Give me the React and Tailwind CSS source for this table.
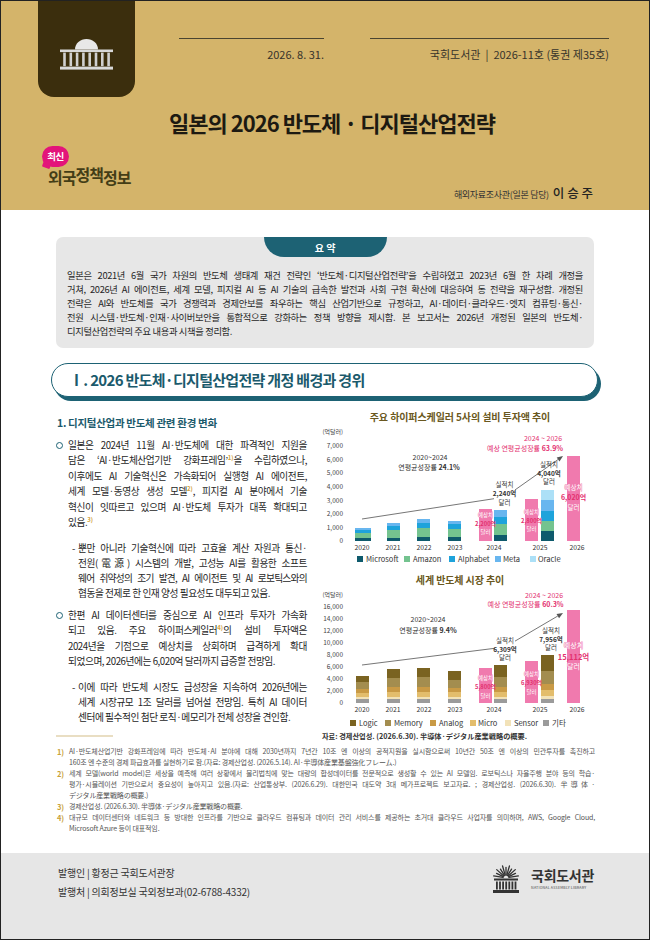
import React from "react";
import clsx from "clsx";

const J = ({ children, className }) => (
  <div className={clsx("whitespace-nowrap text-justify [text-align-last:justify]", className)}>{children}</div>
);
const L = ({ children, className }) => <div className={clsx("whitespace-nowrap", className)}>{children}</div>;
const S = ({ n }) => (
  <span className="relative -top-[4px] text-[6px] font-bold text-[#d3a23c] tracking-normal">{n})</span>
);

function TabIcon() {
  const cols = [0, 1, 2, 3, 4, 5, 6, 7];
  return (
    <svg width="53" height="31" viewBox="0 0 53 31" className="block">
      <path d="M15,10.5 A11.5,10.5 0 0 1 38,10.5 Z" fill="#e8e8e8" />
      <rect x="0" y="10.5" width="53" height="2.6" fill="#d8d8d8" />
      {cols.map((i) => (
        <rect key={i} x={3.2 + i * 6.3} y="13.6" width="2.6" height="13.6" fill="#d0d0d0" />
      ))}
      <rect x="0" y="27.6" width="53" height="3" fill="#dadada" />
    </svg>
  );
}

function LogoIcon() {
  const rays = [];
  for (let i = 0; i < 11; i++) {
    const a = ((190 + i * 16) * Math.PI) / 180;
    const r2 = i % 2 === 0 ? 12.5 : 10.5;
    rays.push(
      <line
        key={i}
        x1={13 + 3 * Math.cos(a)}
        y1={13 + 3 * Math.sin(a)}
        x2={13 + r2 * Math.cos(a)}
        y2={13 + r2 * Math.sin(a)}
        stroke="#333"
        strokeWidth="1.3"
        strokeLinecap="round"
      />
    );
  }
  const cols = [0, 1, 2, 3, 4, 5, 6];
  return (
    <svg width="26" height="28" viewBox="0 0 26 28" className="block">
      {rays}
      <rect x="1" y="13.5" width="24" height="2" fill="#333" />
      {cols.map((i) => (
        <rect key={i} x={3 + i * 3.1} y="16.5" width="1.8" height="8" fill="#333" />
      ))}
      <rect x="0" y="25" width="26" height="3" fill="#333" />
    </svg>
  );
}

const FONT = "'Noto Sans CJK KR', 'Noto Sans', sans-serif";
const PINK = "#f07aae";
const PTXT = "#e3306f";

function Stack({ x, w = 13, base, seg, colors }) {
  let y = base;
  return (
    <g>
      {seg.map((h, i) => {
        y -= h;
        return <rect key={i} x={x} y={y} width={w} height={h} fill={colors[i]} />;
      })}
    </g>
  );
}

function PinkLabel({ cx, y1, y2, y3, s, ns, num }) {
  return (
    <g textAnchor="middle">
      <text x={cx} y={y1} fontSize={s} fill="#fff" stroke={PINK} strokeWidth="0.8" paintOrder="stroke">
        예상치
      </text>
      <text x={cx} y={y2} fontSize={ns} fill={PTXT} fontWeight="700">
        {num}
      </text>
      <text x={cx} y={y3} fontSize={s} fill="#fff" stroke={PINK} strokeWidth="0.8" paintOrder="stroke">
        달러
      </text>
    </g>
  );
}

function ActLabel({ cx, y1, y2, y3, num }) {
  return (
    <g textAnchor="middle" fill="#333">
      <text x={cx} y={y1} fontSize="6.5">실적치</text>
      <text x={cx} y={y2} fontSize="6.5" fontWeight="700">{num}</text>
      <text x={cx} y={y3} fontSize="6.5">달러</text>
    </g>
  );
}

const years = [
  ["2020", 362],
  ["2021", 393],
  ["2022", 424],
  ["2023", 455],
  ["2024", 494],
  ["2025", 540],
  ["2026", 577],
];

function Chart1() {
  const base = 541;
  const C = ["#0e5a6c", "#74c38f", "#1ea3db", "#68b6ef", "#ace0f7"];
  const yl = [
    ["7,000", 7000],
    ["6,000", 6000],
    ["5,000", 5000],
    ["4,000", 4000],
    ["3,000", 3000],
    ["2,000", 2000],
    ["1,000", 1000],
    ["0", 0],
  ];
  const bars = [
    { x: 355, w: 16, seg: [3, 5, 3, 2] },
    { x: 387, seg: [3, 8, 4, 3] },
    { x: 417, seg: [4, 9, 5, 4] },
    { x: 448, seg: [4, 8, 5, 3] },
    { x: 494, seg: [6, 11, 7, 7] },
    { x: 541, seg: [10, 10, 10, 11, 10] },
  ];
  const pinks = [
    [479, 32],
    [525, 42],
    [567, 85],
  ];
  const legend = [
    ["Microsoft", 357, 366],
    ["Amazon", 404, 413],
    ["Alphabet", 449, 458],
    ["Meta", 495, 503],
    ["Oracle", 530, 538],
  ];
  return (
    <svg className="block" width="276" height="141" viewBox="322 425 276 141" fontFamily={FONT}>
      <text x="343" y="434.3" fontSize="6" fill="#444" textAnchor="end">
        (억달러)
      </text>
      {yl.map(([t, v]) => (
        <text key={t} x="343" y={base - v * 0.0136 + 2.3} fontSize="6.5" fill="#444" textAnchor="end">
          {t}
        </text>
      ))}
      {bars.map((b, i) => (
        <Stack key={i} x={b.x} w={b.w || 13} base={base} seg={b.seg} colors={C} />
      ))}
      {pinks.map(([x, h], i) => (
        <rect key={i} x={x} y={base - h} width="13" height={h} fill={PINK} />
      ))}
      <path d="M362,519 L505,497 L558.1,459.5" stroke="#666" strokeWidth="0.9" fill="none" />
      <polygon points="563,456 559.5,461.5 556.7,457.4" fill="#555" />
      <rect x="494" y="480" width="21" height="27" fill="#fff" />
      <g textAnchor="middle" fontSize="7" fill="#333">
        <text x="430" y="459.5">2020~2024</text>
        <text x="429" y="469.5">
          연평균성장률 <tspan fontWeight="700">24.1%</tspan>
        </text>
      </g>
      <g textAnchor="middle" fontSize="7" fill={PTXT}>
        <text x="543" y="440.5">2024 ~ 2026</text>
        <text x="525" y="450.5">
          예상 연평균성장률 <tspan fontWeight="700">63.9%</tspan>
        </text>
      </g>
      <ActLabel cx={504.5} y1={487} y2={495.5} y3={505} num="2,240억" />
      <ActLabel cx={549} y1={467} y2={475.5} y3={484} num="4,040억" />
      <PinkLabel cx={485.5} y1={517} y2={526} y3={534} s={5.5} ns={5.8} num="2,200억" />
      <PinkLabel cx={531.5} y1={514} y2={522.5} y3={531} s={5.5} ns={5.8} num="2,800억" />
      <PinkLabel cx={573.5} y1={489.5} y2={499.5} y3={509.5} s={6.5} ns={7} num="6,020억" />
      {years.map(([t, x]) => (
        <text key={t} x={x} y="549.5" fontSize="6.8" fill="#333" textAnchor="middle">
          {t}
        </text>
      ))}
      {legend.map(([t, rx, tx], i) => (
        <g key={t}>
          <rect x={rx} y="556" width="6" height="6" fill={C[i]} />
          <text x={tx} y="561.8" fontSize="7.5" fill="#333">
            {t}
          </text>
        </g>
      ))}
    </svg>
  );
}

function Chart2() {
  const base = 703;
  const C = ["#9b9b9b", "#f2e2b8", "#e3bd6c", "#c99a45", "#a38d4f", "#7a6321"];
  const yl = [
    ["16,000", 16000],
    ["14,000", 14000],
    ["12,000", 12000],
    ["10,000", 10000],
    ["8,000", 8000],
    ["6,000", 6000],
    ["4,000", 4000],
    ["2,000", 2000],
    ["0", 0],
  ];
  const bars = [
    { x: 356, seg: [4, 2, 4, 4, 7, 6] },
    { x: 387, seg: [4, 2, 5, 5, 9, 9] },
    { x: 417, seg: [4, 2, 5, 5, 10, 9] },
    { x: 448, seg: [4, 2, 5, 4, 8, 9] },
    { x: 494, seg: [4, 2, 5, 5, 10, 12] },
    { x: 541, seg: [4, 3, 6, 6, 13, 16] },
  ];
  const pinks = [
    [479, 35],
    [525, 42],
    [567, 93],
  ];
  const legend = [
    ["Logic", 350, 359],
    ["Memory", 385, 394],
    ["Analog", 430, 439],
    ["Micro", 470, 478],
    ["Sensor", 505, 514],
    ["기타", 543, 552],
  ];
  const legendColors = ["#7a6321", "#a38d4f", "#c99a45", "#e3bd6c", "#f2e2b8", "#9b9b9b"];
  return (
    <svg className="block" width="276" height="142" viewBox="322 588 276 142" fontFamily={FONT}>
      <text x="343" y="597.3" fontSize="6" fill="#444" textAnchor="end">
        (억달러)
      </text>
      {yl.map(([t, v]) => (
        <text key={t} x="343" y={base - v * 0.006 + 2.3} fontSize="6.5" fill="#444" textAnchor="end">
          {t}
        </text>
      ))}
      {bars.map((b, i) => (
        <Stack key={i} x={b.x} base={base} seg={b.seg} colors={C} />
      ))}
      {pinks.map(([x, h], i) => (
        <rect key={i} x={x} y={base - h} width="13" height={h} fill={PINK} />
      ))}
      <path d="M362,665 L505,647 L557.8,616" stroke="#666" strokeWidth="0.9" fill="none" />
      <polygon points="563,613 559.1,618.2 556.5,613.9" fill="#555" />
      <rect x="495" y="636" width="20" height="26" fill="#fff" />
      <g textAnchor="middle" fontSize="7" fill="#333">
        <text x="428" y="621.5">2020~2024</text>
        <text x="428" y="632.5">
          연평균성장률 <tspan fontWeight="700">9.4%</tspan>
        </text>
      </g>
      <g textAnchor="middle" fontSize="7" fill={PTXT}>
        <text x="544" y="597.5">2024 ~ 2026</text>
        <text x="525.5" y="606.5">
          예상 연평균성장률 <tspan fontWeight="700">60.3%</tspan>
        </text>
      </g>
      <ActLabel cx={505} y1={643} y2={651.5} y3={660} num="6,309억" />
      <ActLabel cx={551} y1={633} y2={641.5} y3={650} num="7,956억" />
      <PinkLabel cx={485.5} y1={680} y2={689} y3={698} s={5.5} ns={5.8} num="5,800억" />
      <PinkLabel cx={531.5} y1={676} y2={685} y3={694} s={5.5} ns={5.8} num="6,930억" />
      <PinkLabel cx={573.5} y1={648} y2={660} y3={669} s={7} ns={7.5} num="15,112억" />
      {years.map(([t, x]) => (
        <text key={t} x={x} y="712.3" fontSize="6.8" fill="#333" textAnchor="middle">
          {t}
        </text>
      ))}
      {legend.map(([t, rx, tx], i) => (
        <g key={t}>
          <rect x={rx} y="720" width="6" height="6" fill={legendColors[i]} />
          <text x={tx} y="725.8" fontSize="7.5" fill="#333">
            {t}
          </text>
        </g>
      ))}
    </svg>
  );
}

function Bullet({ className, children }) {
  return (
    <div className={clsx("flex", className)}>
      <div className="w-[12px] shrink-0 pt-[4px]">
        <div className="w-[7px] h-[7px] rounded-full border-[1.5px] border-[#1d6274]" />
      </div>
      <div className="w-[239px] text-[9.7px] leading-[15px] tracking-[-0.45px] text-[#262626]">{children}</div>
    </div>
  );
}

function Sub({ className, children }) {
  return (
    <div className={clsx("flex pl-[16px]", className)}>
      <div className="w-[6px] shrink-0 text-[9.7px] leading-[15px] text-[#262626]">-</div>
      <div className="w-[229px] text-[9.7px] leading-[15px] tracking-[-0.45px] text-[#262626]">{children}</div>
    </div>
  );
}

function Footnote({ n, lines }) {
  return (
    <div className="flex">
      <div className="w-[12px] shrink-0 font-bold text-[#c9a23a] text-[7.5px]">{n})</div>
      <div className="flex-1 min-w-0">
        {lines.map((l, i) =>
          i < lines.length - 1 ? <J key={i}>{l}</J> : <L key={i}>{l}</L>
        )}
      </div>
    </div>
  );
}

export default function App() {
  return (
    <div className="w-[650px] h-[940px] border border-[#222] bg-white flex flex-col overflow-hidden font-['Noto_Sans_CJK_KR','Noto_Sans',sans-serif] text-[#333]">
      {/* Header */}
      <div className="h-[209px] shrink-0 bg-[#d4b46a] flex">
        <div className="w-[139px] shrink-0 pl-[37px] flex flex-col items-start">
          <div className="w-[97px] h-[96px] bg-[#3b2e0d] rounded-b-[16px] flex justify-center pt-[38px]">
            <TabIcon />
          </div>
          <div className="relative mt-[49px] ml-[4px] w-[27px] h-[21px] rounded-full bg-[#e3147a] flex items-center justify-center">
            <span className="absolute left-[1px] bottom-[-1px] w-[8px] h-[8px] bg-[#e3147a] rotate-[20deg] rounded-[1px]" />
            <span className="relative text-white text-[9.5px] font-bold leading-none tracking-[-0.5px]">최신</span>
          </div>
          <div className="ml-[10px] text-[16px] leading-[20px] font-bold text-[#433d16] tracking-[-1px] whitespace-nowrap">
            외국<span className="relative -top-[3px]">정책</span>정보
          </div>
        </div>
        <div className="flex-1 flex flex-col">
          <div className="flex mt-[37px]">
            <div className="ml-[39px] w-[145px] border-t-[1.5px] border-[#4a4430] pt-[7px] text-right text-[11px] leading-[16px] text-[#37332a] whitespace-nowrap">
              2026. 8. 31.
            </div>
            <div className="ml-[46px] w-[239px] border-t-[1.5px] border-[#4a4430] pt-[7px] text-right text-[11px] leading-[16px] text-[#37332a] whitespace-nowrap">
              국회도서관<span className="mx-[5px]">|</span>2026-11호 (통권 제35호)
            </div>
          </div>
          <div className="mt-[45px] ml-[29px] text-[22px] leading-[30px] font-bold tracking-[-1px] text-[#1d1a12] whitespace-nowrap">
            일본의 2026 반도체 · 디지털산업전략
          </div>
          <div className="mt-[47px] flex justify-end items-baseline pr-[56px] whitespace-nowrap">
            <span className="text-[9px] tracking-[-0.3px] text-[#333]">해외자료조사관(일본 담당)</span>
            <span className="ml-[4px] text-[12.5px] font-medium text-[#222]">이 승 주</span>
          </div>
        </div>
      </div>

      {/* Summary */}
      <div className="mt-[27px] mx-[55px] h-[111px] shrink-0 bg-[#e7e7e7] rounded-[7px] flex flex-col">
        <div className="self-center w-[123px] h-[20px] bg-[#1d6274] rounded-b-[20px] flex items-center justify-center text-white text-[10px] font-bold">
          요 약
        </div>
        <div className="mt-[11px] px-[11px] text-[9.3px] leading-[14px] tracking-[-0.35px] text-[#262626]">
          <J>일본은 2021년 6월 국가 차원의 반도체 생태계 재건 전략인 ‘반도체·디지털산업전략’을 수립하였고 2023년 6월 한 차례 개정을</J>
          <J>거쳐, 2026년 AI 에이전트, 세계 모델, 피지컬 AI 등 AI 기술의 급속한 발전과 사회 구현 확산에 대응하여 동 전략을 재구성함. 개정된</J>
          <J>전략은 AI와 반도체를 국가 경쟁력과 경제안보를 좌우하는 핵심 산업기반으로 규정하고, AI·데이터·클라우드·엣지 컴퓨팅·통신·</J>
          <J>전원 시스템·반도체·인재·사이버보안을 통합적으로 강화하는 정책 방향을 제시함. 본 보고서는 2026년 개정된 일본의 반도체·</J>
          <L>디지털산업전략의 주요 내용과 시책을 정리함.</L>
        </div>
      </div>

      {/* Section heading */}
      <div className="mt-[15px] ml-[50px] mr-[51px] h-[34px] shrink-0 rounded-full border-[1.5px] border-[#1d6274] bg-white shadow-[3px_4px_0_0_#1d6274] flex items-center pl-[17px] text-[15px] font-bold tracking-[-0.7px] text-[#1b5a6c] whitespace-nowrap">
        Ⅰ. 2026 반도체·디지털산업전략 개정 배경과 경위
      </div>

      {/* Columns */}
      <div className="mt-[12px] flex shrink-0">
        <div className="ml-[55px] w-[252px] flex flex-col">
          <div className="pt-[6px] pl-[1px] text-[10.5px] leading-[16px] font-bold text-[#1b5a6c] tracking-[-0.3px] whitespace-nowrap">
            1. 디지털산업과 반도체 관련 환경 변화
          </div>
          <Bullet className="mt-[6.5px]">
            <J>일본은 2024년 11월 AI·반도체에 대한 파격적인 지원을</J>
            <J>
              담은 ‘AI·반도체산업기반 강화프레임’<S n="1" />을 수립하였으나,
            </J>
            <J>이후에도 AI 기술혁신은 가속화되어 실행형 AI 에이전트,</J>
            <J>
              세계 모델·동영상 생성 모델<S n="2" />, 피지컬 AI 분야에서 기술
            </J>
            <J>혁신이 잇따르고 있으며 AI·반도체 투자가 대폭 확대되고</J>
            <L>
              있음.<S n="3" />
            </L>
          </Bullet>
          <Sub className="mt-[10px]">
            <J>뿐만 아니라 기술혁신에 따라 고효율 계산 자원과 통신·</J>
            <J>전원(電源) 시스템의 개발, 고성능 AI를 활용한 소프트</J>
            <J className="tracking-[-0.7px]">웨어 취약성의 조기 발견, AI 에이전트 및 AI 로보틱스와의</J>
            <L>협동을 전제로 한 인재 양성 필요성도 대두되고 있음.</L>
          </Sub>
          <Bullet className="mt-[7px]">
            <J>한편 AI 데이터센터를 중심으로 AI 인프라 투자가 가속화</J>
            <J>
              되고 있음. 주요 하이퍼스케일러<S n="4" />의 설비 투자액은
            </J>
            <J>2024년을 기점으로 예상치를 상회하며 급격하게 확대</J>
            <L>되었으며, 2026년에는 6,020억 달러까지 급증할 전망임.</L>
          </Bullet>
          <Sub className="mt-[11px]">
            <J>이에 따라 반도체 시장도 급성장을 지속하여 2026년에는</J>
            <J>세계 시장규모 1조 달러를 넘어설 전망임. 특히 AI 데이터</J>
            <L>센터에 필수적인 첨단 로직·메모리가 전체 성장을 견인함.</L>
          </Sub>
          <div className="mt-auto mb-[5px] w-[57px] h-[2px] bg-[#e9dec3]" />
        </div>
        <div className="ml-[14px] w-[276px] flex flex-col">
          <div className="h-[16px] text-center text-[10px] leading-[16px] font-bold text-[#6a5820] tracking-[-0.1px] whitespace-nowrap">
            주요 하이퍼스케일러 5사의 설비 투자액 추이
          </div>
          <Chart1 />
          <div className="mt-[6px] h-[16px] text-center text-[10px] leading-[16px] font-bold text-[#6a5820] tracking-[-0.1px] whitespace-nowrap">
            세계 반도체 시장 추이
          </div>
          <Chart2 />
          <div className="h-[12px] leading-[12px] text-[7.2px] font-bold text-[#333] whitespace-nowrap">
            자료: 경제산업성. (2026.6.30). 半導体·デジタル産業戦略の概要.
          </div>
        </div>
      </div>

      {/* Footnotes */}
      <div className="mt-[4px] ml-[56px] mr-[54px] text-[7px] leading-[11px] tracking-[-0.15px] text-[#555] shrink-0">
        <Footnote
          n="1"
          lines={[
            "AI·반도체산업기반 강화프레임에 따라 반도체·AI 분야에 대해 2030년까지 7년간 10조 엔 이상의 공적지원을 실시함으로써 10년간 50조 엔 이상의 민관투자를 촉진하고",
            "160조 엔 수준의 경제 파급효과를 실현하기로 함.(자료: 경제산업성. (2026.5.14). AI·半導体産業基盤強化フレーム.)",
          ]}
        />
        <Footnote
          n="2"
          lines={[
            "세계 모델(world model)은 세상을 예측해 여러 상황에서 물리법칙에 맞는 대량의 합성데이터를 전문적으로 생성할 수 있는 AI 모델임. 로보틱스나 자율주행 분야 등의 학습·",
            "평가·시뮬레이션 기반으로서 중요성이 높아지고 있음.(자료: 산업통상부. (2026.6.29). 대한민국 대도약 3대 메가프로젝트 보고자료. ; 경제산업성. (2026.6.30). 半導体·",
            "デジタル産業戦略の概要.)",
          ]}
        />
        <Footnote n="3" lines={["경제산업성. (2026.6.30). 半導体·デジタル産業戦略の概要."]} />
        <Footnote
          n="4"
          lines={[
            "대규모 데이터센터와 네트워크 등 방대한 인프라를 기반으로 클라우드 컴퓨팅과 데이터 관리 서비스를 제공하는 초거대 클라우드 사업자를 의미하며, AWS, Google Cloud,",
            "Microsoft Azure 등이 대표적임.",
          ]}
        />
      </div>

      {/* Footer */}
      <div className="mt-auto h-[86px] shrink-0 bg-[#e6e6e6] flex justify-between items-start">
        <div className="pl-[57px] pt-[10px] text-[10px] leading-[19px] tracking-[-0.2px] text-[#333] whitespace-nowrap">
          <div>발행인 | 황정근 국회도서관장</div>
          <div>발행처 | 의회정보실 국외정보과(02-6788-4332)</div>
        </div>
        <div className="pr-[55px] pt-[12px] flex items-center">
          <LogoIcon />
          <div className="ml-[12px] flex flex-col">
            <div className="text-[14px] leading-[14px] font-bold text-[#333] tracking-[-0.3px] whitespace-nowrap">국회도서관</div>
            <div className="mt-[3px] text-[3.6px] leading-[5px] text-[#444] tracking-[0.2px] whitespace-nowrap">NATIONAL ASSEMBLY LIBRARY</div>
          </div>
        </div>
      </div>
    </div>
  );
}
